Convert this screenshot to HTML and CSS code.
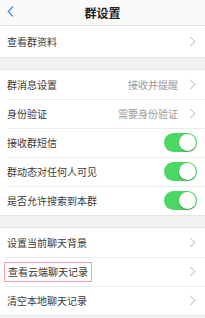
FILE: index.html
```html
<!DOCTYPE html>
<html lang="zh">
<head>
<meta charset="utf-8">
<link rel="stylesheet" href="styles.css">
</head>
<body>
<div class="page">
  <header class="nav">
    <svg class="back" width="7" height="11" viewBox="0 0 7 11"><path d="M6 0.5 L1.2 5.5 L6 10.5" fill="none" stroke="#4a8fe0" stroke-width="1.3"/></svg>
    <div class="title">群设置</div>
  </header>
  <section class="group first">
    <div class="row tall"><span class="label">查看群资料</span><span class="chev"></span></div>
  </section>
  <section class="group">
    <div class="row"><span class="label">群消息设置</span><span class="value">接收并提醒</span><span class="chev"></span></div>
    <div class="row"><span class="label">身份验证</span><span class="value">需要身份验证</span><span class="chev"></span></div>
    <div class="row"><span class="label">接收群短信</span><span class="switch"><span class="knob"></span></span></div>
    <div class="row"><span class="label">群动态对任何人可见</span><span class="switch"><span class="knob"></span></span></div>
    <div class="row last"><span class="label">是否允许搜索到本群</span><span class="switch"><span class="knob"></span></span></div>
  </section>
  <section class="group">
    <div class="row"><span class="label">设置当前聊天背景</span><span class="chev"></span></div>
    <div class="row"><span class="label boxed">查看云端聊天记录</span><span class="chev"></span></div>
    <div class="row"><span class="label">清空本地聊天记录</span><span class="chev"></span></div>
  </section>
</div>
</body>
</html>
```
FILE: styles.css
```css
html, body {
  margin: 0;
  padding: 0;
  background: #f2f2f4;
}
.page {
  width: 205px;
  height: 318px;
  overflow: hidden;
  font-family: "Noto Sans CJK SC", "Noto Sans", sans-serif;
  color: #333;
  background: #f2f2f4;
}
.nav {
  height: 25px;
  background: #fafafa;
  border-bottom: 1px solid #dedede;
  display: flex;
  align-items: center;
  justify-content: center;
  position: relative;
}
.back {
  position: absolute;
  left: 7px;
  top: 6px;
}
.title {
  font-size: 12px;
  font-weight: 700;
  color: #222;
  line-height: 1;
}
.group {
  background: #fff;
  margin-top: 11px;
  border-top: 1px solid #e6e6e6;
  border-bottom: 1px solid #e6e6e6;
}
.group.first {
  margin-top: 0;
  border-top: none;
}
.row {
  height: 29px;
  display: flex;
  align-items: center;
  padding-left: 7px;
  padding-right: 8px;
  position: relative;
  font-size: 10px;
}
.row.tall {
  height: 31px;
}
.row + .row::before {
  content: "";
  position: absolute;
  left: 7px;
  right: 0;
  top: 0;
  height: 1px;
  background: #ececec;
}
.label {
  flex: 1;
  line-height: 1;
  color: #3a3a3a;
}
.label.boxed {
  flex: 0 0 auto;
  margin-left: -3px;
  padding: 4px 3px;
  border: 1px solid #f0a0a8;
  margin-right: auto;
}
.value {
  color: #9a9a9a;
  margin-right: 9px;
  line-height: 1;
}
.chev {
  width: 6px;
  height: 6px;
  border-top: 1px solid #c8c8c8;
  border-right: 1px solid #c8c8c8;
  transform: rotate(45deg);
  margin-right: 3px;
}
.switch {
  width: 33px;
  height: 19px;
  border-radius: 10px;
  background: #4cd764;
  position: relative;
}
.knob {
  position: absolute;
  right: 1px;
  top: 1px;
  width: 17px;
  height: 17px;
  border-radius: 50%;
  background: #fff;
  box-shadow: 0 1px 2px rgba(0,0,0,0.3);
}
```
